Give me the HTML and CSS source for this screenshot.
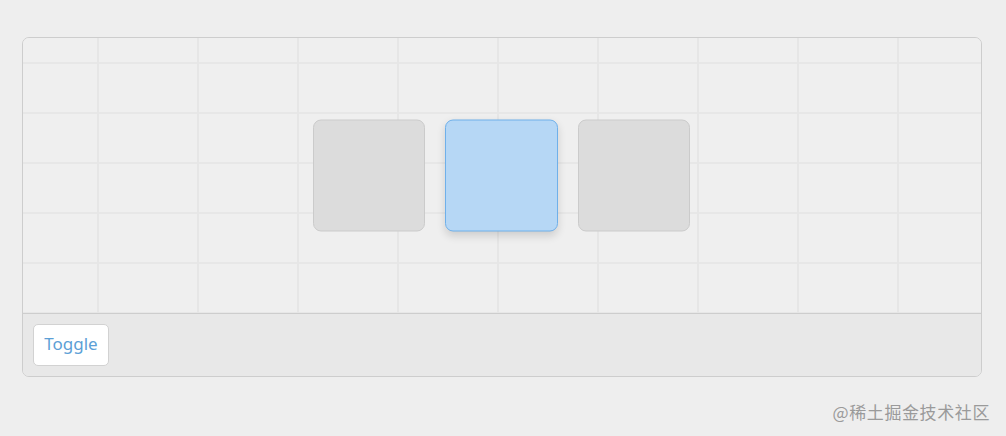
FILE: index.html
```html
<!DOCTYPE html>
<html lang="zh">
<head>
<meta charset="utf-8">
<title>Toggle</title>
<link rel="stylesheet" href="styles.css">
</head>
<body>
<div class="card">
  <div class="canvas">
    <div class="tiles">
      <div class="tile"></div>
      <div class="tile active"></div>
      <div class="tile"></div>
    </div>
  </div>
  <div class="footer">
    <button class="toggle">Toggle</button>
  </div>
</div>
<div class="watermark">@稀土掘金技术社区</div>
</body>
</html>
```
FILE: styles.css
```css
html, body {
  margin: 0;
  padding: 0;
  background: #eeeeee;
}
body {
  padding: 37px 0 0 22px;
  font-family: "Noto Sans", "Noto Sans CJK SC", sans-serif;
  width: 984px;
  height: 399px;
  position: relative;
}
.card {
  width: 958px;
  border: 1px solid #cdcdcd;
  border-radius: 7px;
  overflow: hidden;
  background: #efefef;
}
.canvas {
  height: 275px;
  border-bottom: 1px solid #cdcdcd;
  background-color: #efefef;
  background-image:
    linear-gradient(to right, #e6e6e6 2px, transparent 2px),
    linear-gradient(to bottom, #e7e7e7 2px, transparent 2px);
  background-size: 100px 100%, 100% 50px;
  background-position: 74px 0, 0 24px;
  display: flex;
  align-items: center;
  justify-content: center;
}
.tiles {
  display: flex;
  gap: 20px;
  transform: translate(-1px, -0.5px);
}
.tile {
  width: 110px;
  height: 110px;
  background: #dcdcdc;
  border: 1px solid #cbcbcb;
  border-radius: 8px;
}
.tile.active {
  width: 111px;
  background: #b6d7f5;
  border-color: #6fb0ea;
  box-shadow: 0 4px 8px rgba(0, 0, 0, 0.14);
}
.footer {
  background: #e8e8e8;
  padding: 10px;
  height: 42px;
}
.toggle {
  height: 42px;
  width: 76px;
  background: #ffffff;
  border: 1px solid #d2d2d2;
  border-radius: 5px;
  color: #5c9fd6;
  font-family: "Noto Sans", sans-serif;
  font-size: 17px;
  padding: 0 0 3px 0;
}
.watermark {
  position: absolute;
  right: 16px;
  top: 399px;
  color: #9a9a9a;
  font-size: 17px;
  font-family: "Noto Sans CJK SC", sans-serif;
  letter-spacing: 0.6px;
}
```
